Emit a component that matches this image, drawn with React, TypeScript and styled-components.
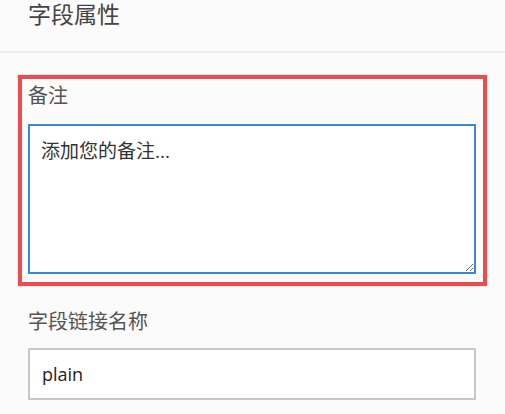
import React from "react";
import styled, { createGlobalStyle } from "styled-components";

const Global = createGlobalStyle`
  html, body { margin: 0; padding: 0; background: #fbfbfb; }
  body { font-family: "Open Sans", "Noto Sans CJK SC", sans-serif; color: #333; }
  * { box-sizing: border-box; }
`;

const Panel = styled.div`
  width: 505px;
  height: 414px;
  overflow: hidden;
  background: #fbfbfb;
`;

const Header = styled.div`
  height: 53px;
  padding: 0 28px;
  border-bottom: 2px solid #efefef;
  font-family: "Noto Sans CJK SC", sans-serif;
  font-size: 23px;
  line-height: 26px;
  color: #444;
`;

const Body = styled.div`
  padding: 22px 18px 0;
`;

const Highlight = styled.div`
  border: 4px solid #ea4d50;
  box-shadow: 0 0 1px rgba(234, 77, 80, 0.6);
  padding: 4px 7px 8px 6px;
`;

const Field = styled.div<{ $inset?: boolean }>`
  padding: ${(p) => (p.$inset ? "0 11px 0 10px" : "0")};
  margin-top: ${(p) => (p.$inset ? "23px" : "0")};
`;

const Label = styled.div<{ $gap: number }>`
  font-family: "Noto Sans CJK SC", sans-serif;
  font-size: 20px;
  line-height: 24px;
  color: #555;
  margin-bottom: ${(p) => p.$gap}px;
`;

const TextArea = styled.textarea`
  display: block;
  width: 448px;
  height: 150px;
  border: 2px solid #3b88d9;
  border-radius: 0;
  background: #fff;
  padding: 12px 11px;
  font-family: "Open Sans", "Noto Sans CJK SC", sans-serif;
  font-size: 19px;
  line-height: 26px;
  color: #333;
  outline: none;
  resize: vertical;
  margin: 0;
  &::placeholder { color: #333; opacity: 1; }
`;

const Input = styled.input`
  display: block;
  width: 448px;
  height: 52px;
  border: 2px solid #c8c8cc;
  border-radius: 0;
  background: #fff;
  padding: 0 12px;
  font-family: "Open Sans", "Noto Sans CJK SC", sans-serif;
  font-size: 18px;
  color: #222;
  outline: none;
  margin: 0;
`;

export default function App() {
  return (
    <Panel>
      <Global />
      <Header>字段属性</Header>
      <Body>
        <Highlight>
          <Label $gap={17}>备注</Label>
          <TextArea placeholder="添加您的备注..." />
        </Highlight>
        <Field $inset>
          <Label $gap={15}>字段链接名称</Label>
          <Input defaultValue="plain" />
        </Field>
      </Body>
    </Panel>
  );
}
